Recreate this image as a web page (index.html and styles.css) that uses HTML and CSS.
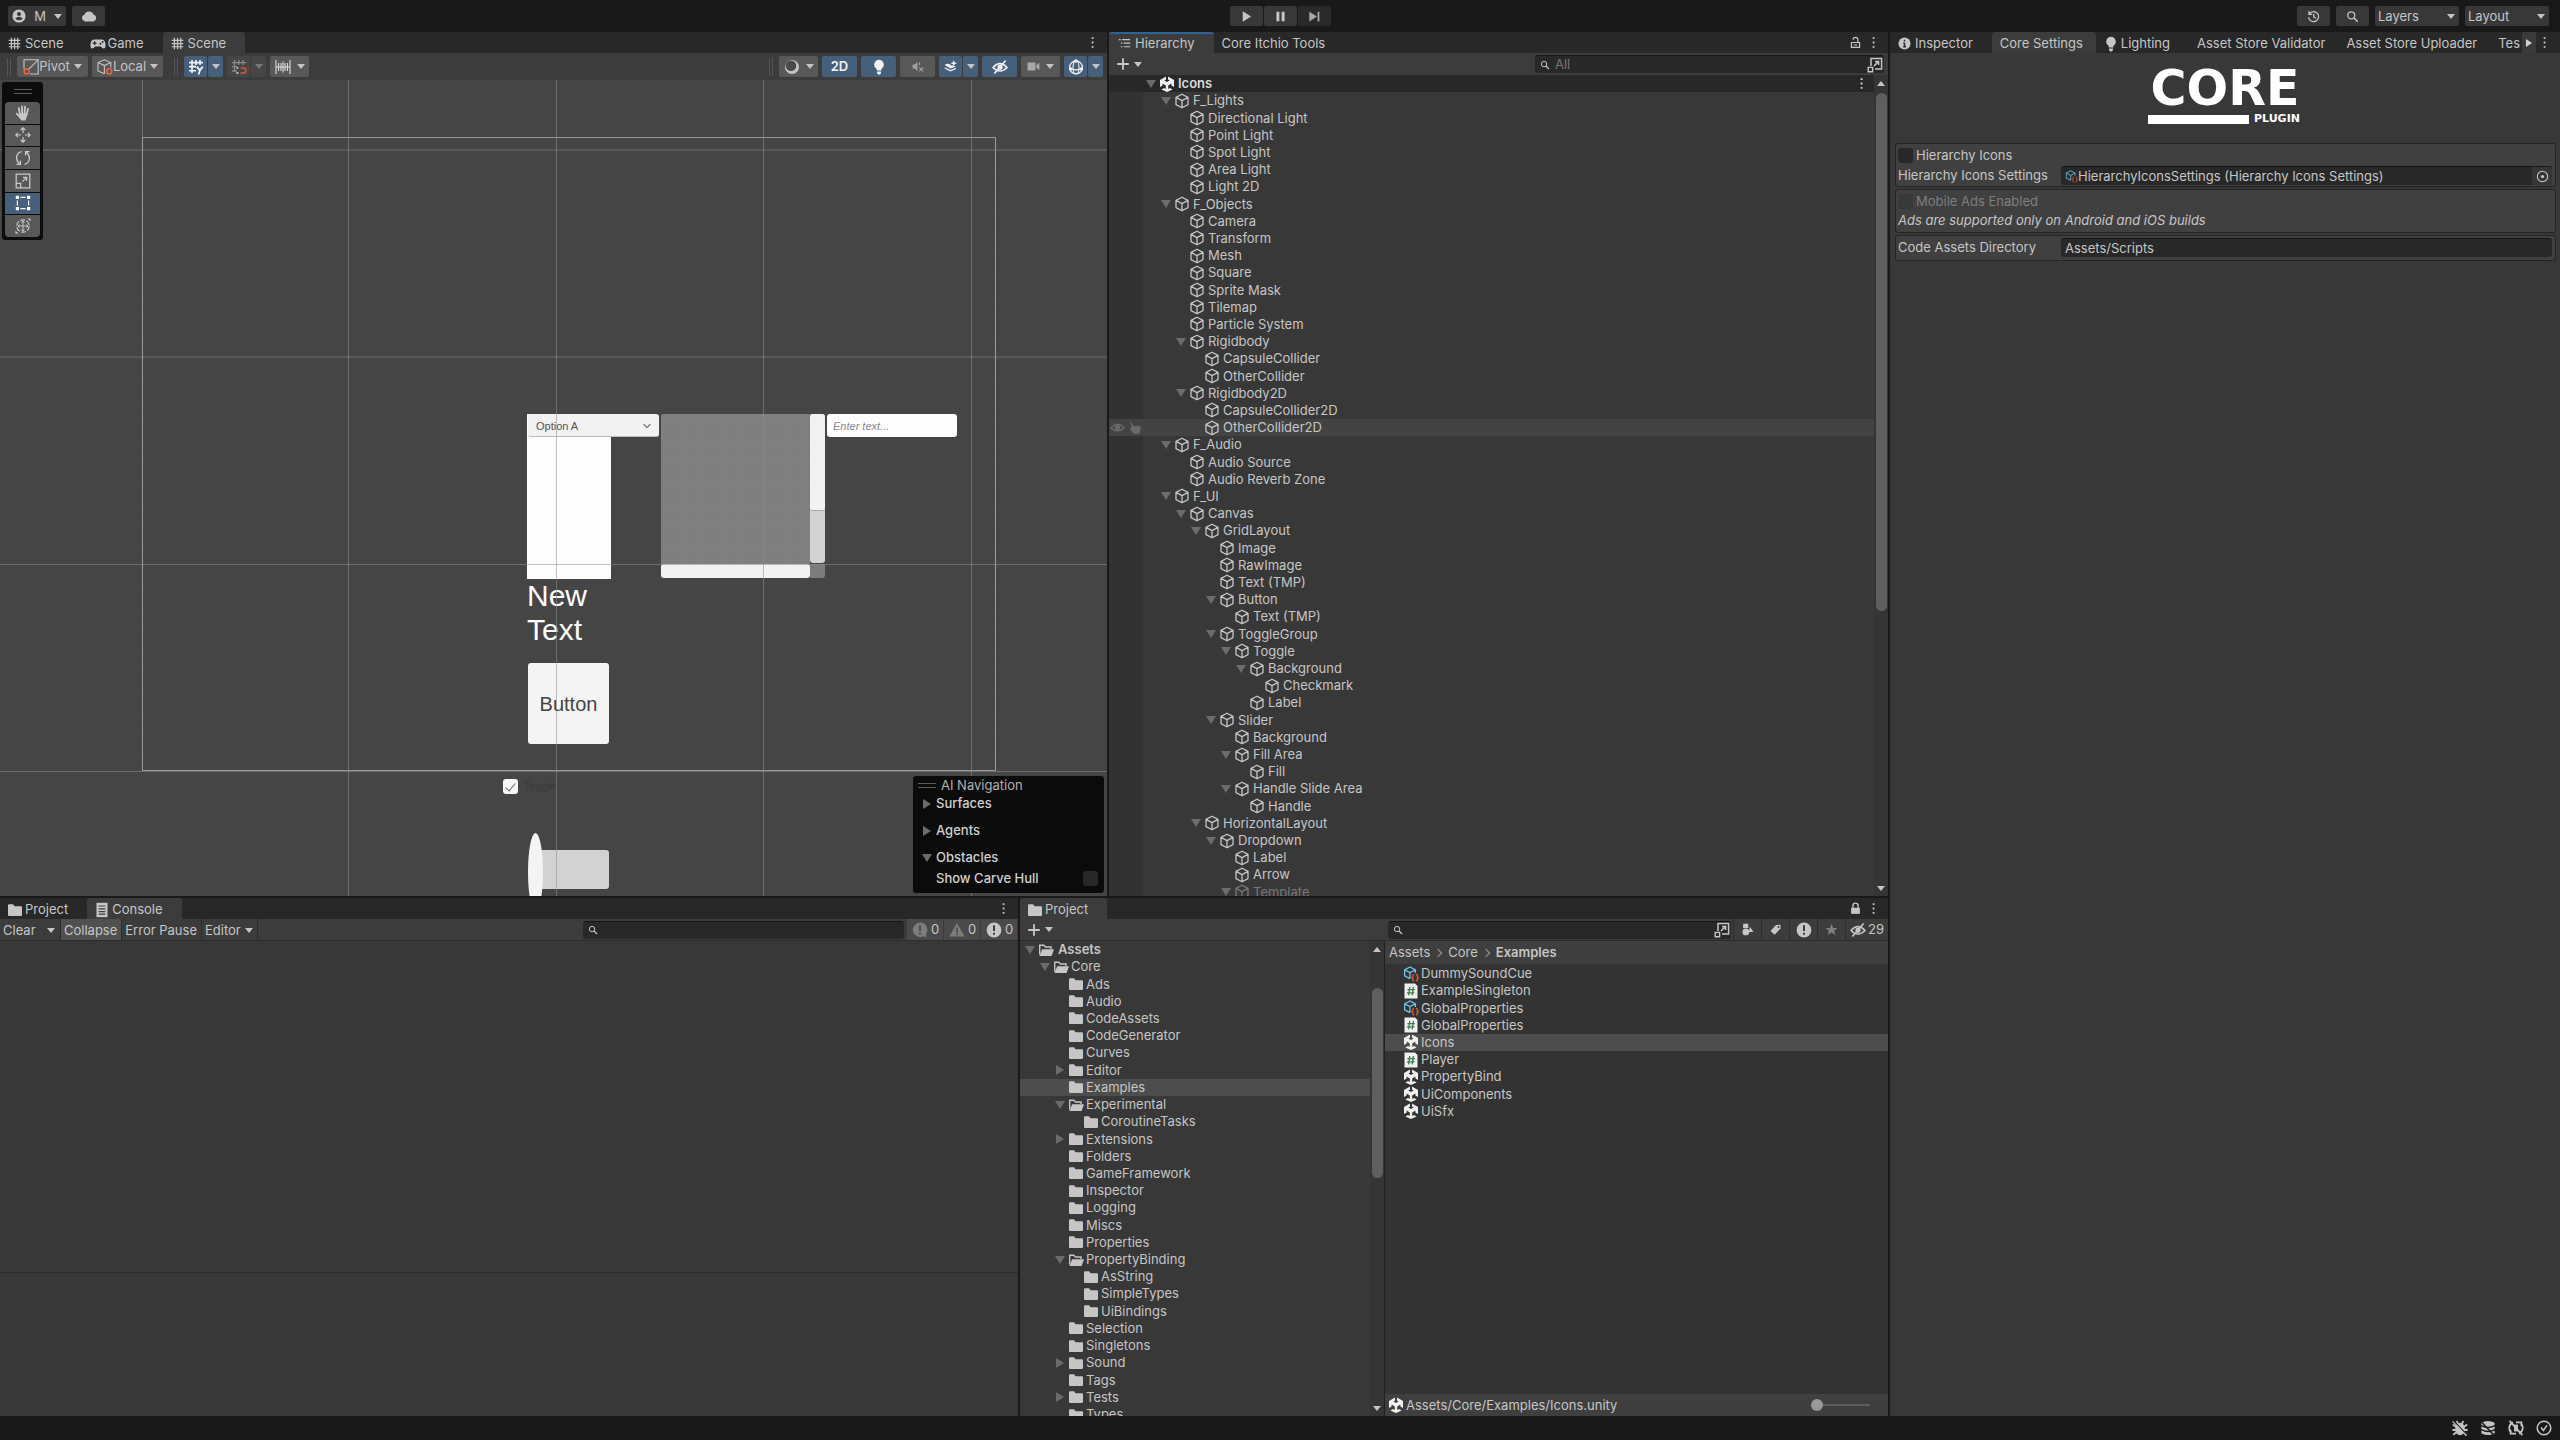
FILE: index.html
```html
<!DOCTYPE html>
<html lang="en">
<head>
<meta charset="utf-8">
<title>Unity Editor - Icons</title>
<link rel="stylesheet" href="styles.css">
</head>
<body>
<svg class="defs" aria-hidden="true">
  <symbol id="cube" viewBox="0 0 16 16"><path d="M8 1.2 14 4.4V11.6L8 14.8 2 11.6V4.4ZM2 4.4 8 7.6 14 4.4M8 7.6V14.8" fill="none" stroke="currentColor" stroke-width="1.3" stroke-linejoin="round"/></symbol>
  <symbol id="unity" viewBox="0 0 16 16"><path d="M7 .4V3.4L5.4 4.4 8 5.9 10.6 4.4 9 3.4V.4L15 3.9V11L12.4 9.5V7.6L9.2 9.4V13L11 12 13.6 13.4 8 16 2.4 13.4 5 12 6.8 13V9.4L3.6 7.6V9.5L1 11V3.9Z" fill="#f0f0f0"/></symbol>
  <symbol id="folder" viewBox="0 0 16 16"><path d="M1 3.2Q1 2.2 2 2.2H6L7.6 4.2H14Q15 4.2 15 5.2V13Q15 14 14 14H2Q1 14 1 13Z" fill="currentColor"/></symbol>
  <symbol id="folder-open" viewBox="0 0 16 16"><path d="M1.7 12.6V3.2H5.8L7.4 5H13V7" fill="none" stroke="currentColor" stroke-width="1.4"/><path d="M4.2 7.2H16L13.6 14H1.4Z" fill="currentColor"/></symbol>
  <symbol id="asset" viewBox="0 0 16 16"><path d="M7 12.6 1.6 9.8V3.8L7 1 12.4 3.8V7M1.6 3.8 7 6.6 12.4 3.8M7 6.6V12.6" fill="none" stroke="#6fc3ea" stroke-width="1.3"/><path d="M11.2 8.4Q9.8 8.4 9.8 9.8V10.8L9 11.6 9.8 12.4V13.6Q9.8 15 11.2 15M13 8.4Q14.4 8.4 14.4 9.8V10.8L15.2 11.6 14.4 12.4V13.6Q14.4 15 13 15" fill="none" stroke="#e0562f" stroke-width="1.4"/></symbol>
  <symbol id="script" viewBox="0 0 16 16"><path d="M1.5 .5H12L14.5 3V15.5H1.5Z" fill="#f0f0f0"/><path d="M6.8 4 5.6 12.4M10.4 4 9.2 12.4M4.4 6.6H11.8M4 9.8H11.4" stroke="#3c7a4c" stroke-width="1.3" fill="none"/></symbol>
  <symbol id="search" viewBox="0 0 16 16"><circle cx="6.5" cy="6.5" r="4.3" fill="none" stroke="currentColor" stroke-width="1.6"/><path d="M9.6 9.6 14.4 14.4" stroke="currentColor" stroke-width="2"/></symbol>
  <symbol id="grid" viewBox="0 0 16 16"><path d="M4.2 1V15M8.1 1V15M12 1V15M1 4.2H15M1 8.1H15M1 12H15" stroke="currentColor" stroke-width="1.5" fill="none"/></symbol>
  <symbol id="gamepad" viewBox="0 0 16 16"><path d="M4 3.6H12Q15.6 4.2 15.6 9.6 15.6 12.4 13.8 12.4 12.4 12.4 10.8 10.4H5.2Q3.6 12.4 2.2 12.4 .4 12.4 .4 9.6 .4 4.2 4 3.6Z" fill="currentColor"/><path d="M4.6 5.2V9M2.7 7.1H6.5" stroke="#282828" stroke-width="1.3"/><circle cx="10.4" cy="7.8" r="1" fill="#282828"/><circle cx="12.6" cy="6" r="1" fill="#282828"/></symbol>
  <symbol id="list" viewBox="0 0 16 16"><path d="M5 3.2H15M7 7.6H15M7 12H15" stroke="currentColor" stroke-width="1.5"/><path d="M1 3.2H3.4M3.4 7.6H5.4M3.4 12H5.4" stroke="currentColor" stroke-width="1.5"/></symbol>
  <symbol id="info" viewBox="0 0 16 16"><circle cx="8" cy="8" r="7.4" fill="currentColor"/><path d="M8 7V12.2M8 3.4V5.4M6.6 7.4H8M6.4 12H9.8" stroke="#282828" stroke-width="1.8"/></symbol>
  <symbol id="alert" viewBox="0 0 16 16"><circle cx="8" cy="8" r="7.4" fill="currentColor"/><path d="M8 3.2V9M8 10.8V12.8" stroke="#3c3c3c" stroke-width="2"/></symbol>
  <symbol id="chat" viewBox="0 0 16 16"><path d="M8 .6A7.2 7.2 0 1 0 11.4 14.2L14.6 15.6 13.8 12.2A7.2 7.2 0 0 0 8 .6Z" fill="currentColor"/><path d="M8 3.4V9M8 10.6V12.4" stroke="#4a4a4a" stroke-width="1.9"/></symbol>
  <symbol id="warn" viewBox="0 0 16 16"><path d="M8 1 15.6 14.6H.4Z" fill="currentColor"/><path d="M8 5.4V10.4M8 11.6V13.2" stroke="#4a4a4a" stroke-width="1.7"/></symbol>
  <symbol id="bulb" viewBox="0 0 16 16"><path d="M8 .8A4.8 4.8 0 0 0 5.4 9.6L5.8 11.6H10.2L10.6 9.6A4.8 4.8 0 0 0 8 .8ZM6 12.5H10V14L9 15.4H7L6 14Z" fill="currentColor"/></symbol>
  <symbol id="doc" viewBox="0 0 16 16"><path d="M2.5 .8H13.5V15.2H2.5Z" fill="currentColor"/><path d="M4.6 4H11.4M4.6 6.8H11.4M4.6 9.6H11.4M4.6 12.2H11.4" stroke="#3c3c3c" stroke-width="1.2"/></symbol>
  <symbol id="dots" viewBox="0 0 16 16"><path d="M7 1.6H9.2V3.8H7ZM7 6.9H9.2V9.1H7ZM7 12.2H9.2V14.4H7Z" fill="currentColor"/></symbol>
  <symbol id="lock" viewBox="0 0 16 16"><path d="M4.8 7V4.6A3.2 3.2 0 0 1 11.2 4.6V7" fill="none" stroke="currentColor" stroke-width="1.7"/><path d="M2.6 7H13.4V14.6H2.6Z" fill="currentColor"/></symbol>
  <symbol id="unlock" viewBox="0 0 16 16"><path d="M5 4.6A3 3 0 0 1 11 4.6V8M3 8H13V14H3Z" fill="none" stroke="currentColor" stroke-width="1.5"/><path d="M6 11H10" stroke="currentColor" stroke-width="1.3"/></symbol>
  <symbol id="plus" viewBox="0 0 16 16"><path d="M8 1.4V14.6M1.4 8H14.6" stroke="currentColor" stroke-width="2.1"/></symbol>
  <symbol id="popout" viewBox="0 0 16 16"><path d="M4 9V1.4H14.6V12H8" fill="none" stroke="currentColor" stroke-width="1.5"/><path d="M1.2 10.4H5.6V14.8H1.2Z" fill="none" stroke="currentColor" stroke-width="1.4"/><path d="M7 9 11.6 4.4M8 4.4H11.6V8" fill="none" stroke="currentColor" stroke-width="1.5"/></symbol>
  <symbol id="eye-off" viewBox="0 0 16 16"><path d="M1 8.4Q8 .6 15 8.4 8 15.6 1 8.4Z" fill="none" stroke="currentColor" stroke-width="1.5"/><circle cx="8" cy="8.2" r="2.6" fill="currentColor"/><path d="M2.4 14.6 13.6 1.6" stroke="currentColor" stroke-width="1.6"/></symbol>
  <symbol id="eye" viewBox="0 0 16 16"><path d="M1 8.2Q8 .8 15 8.2 8 15 1 8.2Z" fill="none" stroke="currentColor" stroke-width="1.5"/><circle cx="8" cy="8" r="2.8" fill="currentColor"/></symbol>
  <symbol id="pick" viewBox="0 0 16 16"><path d="M3.4 1.4 7 6.4 13 6.6Q14.8 6.8 14.6 9L13.4 14.6H7L2.8 9.2 4.8 8.6Z" fill="currentColor"/></symbol>
  <symbol id="user" viewBox="0 0 16 16"><circle cx="8" cy="8" r="7.5" fill="currentColor"/><circle cx="8" cy="5.6" r="2.3" fill="#383838"/><path d="M3.6 11Q8 6.8 12.4 11 8 14.6 3.6 11Z" fill="#383838"/></symbol>
  <symbol id="cloud" viewBox="0 0 16 16"><path d="M4 13.4A3.4 3.4 0 0 1 3.4 6.8 4.8 4.8 0 0 1 12.4 6.4 3.6 3.6 0 0 1 12.2 13.4Z" fill="currentColor"/></symbol>
  <symbol id="play" viewBox="0 0 16 16"><path d="M3.4 1.6 13.6 8 3.4 14.4Z" fill="currentColor"/></symbol>
  <symbol id="pause" viewBox="0 0 16 16"><path d="M3 2.2H6.6V13.8H3ZM9.4 2.2H13V13.8H9.4Z" fill="currentColor"/></symbol>
  <symbol id="step" viewBox="0 0 16 16"><path d="M1.6 2 11 8 1.6 14ZM11.8 2H14V14H11.8Z" fill="currentColor"/></symbol>
  <symbol id="history" viewBox="0 0 16 16"><path d="M3 4.6A6.2 6.2 0 1 1 2 9M2.4 1.4V5.4H6.4M8.4 4.6V8.8L11 10.2" fill="none" stroke="currentColor" stroke-width="1.6"/></symbol>
  <symbol id="pivot" viewBox="0 0 16 16"><path d="M1 10V.8H15.2V15H7M5.6 10.4 14.6 1.4" fill="none" stroke="#c4c4c4" stroke-width="1.1"/><circle cx="3.6" cy="12.6" r="2.5" fill="none" stroke="#f0633c" stroke-width="1.5"/></symbol>
  <symbol id="local" viewBox="0 0 16 16"><path d="M7.4 14.8 1 12V3.6L7.4 .8 13.8 3.6V8.4M1 3.6 7.4 6.6 13.8 3.6M7.4 6.6V14.8" fill="none" stroke="#c4c4c4" stroke-width="1.1"/><circle cx="12.2" cy="12.4" r="2.6" fill="none" stroke="#f0633c" stroke-width="1.6"/></symbol>
  <symbol id="grid-y" viewBox="0 0 16 16"><path d="M4 1V14M8 1V6M12 1V6M1 3.6H15M1 7.6H8M1 11.8H8" stroke="currentColor" stroke-width="1.6" fill="none"/><path d="M8.8 7.6 11.8 11.4 14.8 7.6M11.8 11.4 10.6 15.6" stroke="currentColor" stroke-width="1.8" fill="none"/></symbol>
  <symbol id="snap" viewBox="0 0 16 16"><path d="M3.6 1V13M7.8 1V6M12 1V6M1 3.6H15M1 7.6H6M1 11.8H6" stroke="#8a8a8a" stroke-width="1.3" fill="none"/><path d="M9.6 8.8H12.4A2.6 2.6 0 0 1 12.4 14H9.6" stroke="#c4533a" stroke-width="1.8" fill="none"/><path d="M6.4 8V9.8M6.4 13V15" stroke="#c4c4c4" stroke-width="1.8"/></symbol>
  <symbol id="ruler" viewBox="0 0 16 16"><path d="M1 1V15M15 1V15M3.6 4V12M6 4V12M8 2.6V13.4M10 4V12M12.4 4V12M1 8H15" stroke="currentColor" stroke-width="1.1" fill="none"/></symbol>
  <symbol id="sphere" viewBox="0 0 16 16"><circle cx="8" cy="8" r="7" fill="#c4c4c4"/><circle cx="7" cy="6.8" r="5.3" fill="#4a4a4a"/></symbol>
  <symbol id="mute" viewBox="0 0 16 16"><path d="M2 5.4H4.6L8 2.4V13.6L4.6 10.6H2Z" fill="#a4a4a4"/><path d="M10 9 15 14M15 9 10 14M10.4 3V6.6" stroke="#a4a4a4" stroke-width="1.3"/></symbol>
  <symbol id="fx" viewBox="0 0 16 16"><path d="M.8 6.2Q4 3.4 7.2 5.2 8 7 11 6.8L14.6 8 8 10.6ZM.8 9 8 12.2 14.8 9.4V11L8 14 .8 10.6Z" fill="currentColor"/><path d="M12 0 13 2.8 16 4 13 5.2 12 8 11 5.2 8 4 11 2.8Z" fill="currentColor"/></symbol>
  <symbol id="camera" viewBox="0 0 16 16"><path d="M.6 3H10.4V13H.6ZM11.4 6.6 15.2 3.4V12.6L11.4 9.4Z" fill="#a8a8a8"/></symbol>
  <symbol id="gizmo" viewBox="0 0 16 16"><circle cx="8" cy="8.4" r="6.4" fill="none" stroke="currentColor" stroke-width="1.3"/><ellipse cx="8" cy="8.4" rx="3" ry="6.4" fill="none" stroke="currentColor" stroke-width="1.1"/><path d="M1.6 9.4Q8 12.4 14.4 9.4" fill="none" stroke="currentColor" stroke-width="1.2"/><circle cx="8" cy="2" r="1.8" fill="currentColor"/><circle cx="2.6" cy="10" r="1.7" fill="currentColor"/><circle cx="13.4" cy="10" r="1.7" fill="currentColor"/></symbol>
  <symbol id="hand" viewBox="0 0 16 16"><path d="M5 10 3.8 3.2M7.2 9 7 1.4M9.6 9 10 1.6M11.6 10 13 4M5.4 12.4 1.6 8.6" stroke="currentColor" stroke-width="1.8" stroke-linecap="round"/><path d="M4 8.4H12.6L11.4 13 10.4 15.6H6.4L4 12.4Z" fill="currentColor"/></symbol>
  <symbol id="move" viewBox="0 0 16 16"><path d="M8 1V6M8 10V15M1 8H6M10 8H15M5.8 3 8 .8 10.2 3M5.8 13 8 15.2 10.2 13M3 5.8 .8 8 3 10.2M13 5.8 15.2 8 13 10.2" fill="none" stroke="currentColor" stroke-width="1.2"/></symbol>
  <symbol id="rotate" viewBox="0 0 16 16"><path d="M6.4 1.6Q1.6 3 1.6 8 1.6 11.4 4.8 14M9.6 14.4Q14.4 13 14.4 8 14.4 4.6 11.2 2M1.4 14.4H5.4V10.6M14.6 1.6H10.6V5.4" fill="none" stroke="currentColor" stroke-width="1.3"/></symbol>
  <symbol id="scale" viewBox="0 0 16 16"><path d="M1.2 1.2H14.8V14.8H1.2ZM1.2 10.4H5.6V14.8M7.4 8.6 11.6 4.4M8 4.4H11.6V8" fill="none" stroke="currentColor" stroke-width="1.3"/></symbol>
  <symbol id="rect" viewBox="0 0 16 16"><path d="M5.4 2.4H10.6M5.4 13.6H10.6M2.4 5.4V10.6M13.6 5.4V10.6" stroke="currentColor" stroke-width="1.2"/><path d="M.8 .8H4V4H.8ZM12 .8H15.2V4H12ZM.8 12H4V15.2H.8ZM12 12H15.2V15.2H12Z" fill="currentColor"/></symbol>
  <symbol id="transform" viewBox="0 0 16 16"><circle cx="8" cy="8" r="6.2" fill="none" stroke="currentColor" stroke-width="1.2" stroke-dasharray="5 1.4"/><path d="M8 3V13M3 8H13M6.4 4.6 8 3 9.6 4.6M6.4 11.4 8 13 9.6 11.4M4.6 6.4 3 8 4.6 9.6M11.4 6.4 13 8 11.4 9.6" fill="none" stroke="currentColor" stroke-width="1"/><path d="M12.4 .4H15.6V3.6ZM.4 12.4V15.6H3.6Z" fill="currentColor"/></symbol>
  <symbol id="shapes" viewBox="0 0 16 16"><path d="M2.6 .8H9V6H2.6ZM11 4.6 15.4 11H9.6Z" fill="currentColor"/><circle cx="6" cy="11" r="4.2" fill="currentColor"/></symbol>
  <symbol id="tag" viewBox="0 0 16 16"><path d="M8.6 2.6 14 2 14.2 6.6 7 14.6 1.8 9.8Z" fill="currentColor"/><circle cx="11.6" cy="4.8" r="1.2" fill="#3c3c3c"/></symbol>
  <symbol id="star" viewBox="0 0 16 16"><path d="M8 1 10 6H15.4L11.2 9.4 12.8 14.8 8 11.6 3.2 14.8 4.8 9.4 .6 6H6Z" fill="#7e7e7e"/></symbol>
  <symbol id="target" viewBox="0 0 16 16"><circle cx="8" cy="8" r="6.4" fill="none" stroke="currentColor" stroke-width="1.3"/><circle cx="8" cy="8" r="2" fill="currentColor"/></symbol>
  <symbol id="bug-off" viewBox="0 0 16 16"><ellipse cx="8" cy="9" rx="4.8" ry="6.2" fill="currentColor"/><path d="M4.6 1 6.4 4.4M11.4 1 9.6 4.4M.8 4.6 4.4 7M.4 10H4M1.2 14.8 4.6 12M15.2 4.6 11.6 7M15.6 10H12M14.8 14.8 11.4 12" stroke="currentColor" stroke-width="1.8"/><path d="M1.4 .6 15.4 15.2" stroke="#191919" stroke-width="1.2"/><path d="M.6 1.4 14.6 16" stroke="currentColor" stroke-width="1.2"/></symbol>
  <symbol id="cache-off" viewBox="0 0 16 16"><path d="M1.4 2.8Q8-.6 14.6 2.8V5Q8 8.4 1.4 5ZM1.4 6.6Q8 10 14.6 6.6V9Q8 12.6 1.4 9ZM1.4 10.6Q8 14 14.6 10.6V13.2Q8 17 1.4 13.2Z" fill="currentColor"/><path d="M2 2.6 14.6 16" stroke="#191919" stroke-width="1.5"/></symbol>
  <symbol id="refresh-off" viewBox="0 0 16 16"><path d="M3 12.6A6.6 6.6 0 0 1 5 2.2M13 3.4A6.6 6.6 0 0 1 11 13.8M8 2.4H13.4V6M8 13.6H2.6V10M1.6 .8 14.4 15.2" fill="none" stroke="currentColor" stroke-width="1.8"/><path d="M6 4.6H10V11.4H6Z" fill="currentColor"/></symbol>
  <symbol id="ok" viewBox="0 0 16 16"><circle cx="8" cy="8" r="6.8" fill="none" stroke="currentColor" stroke-width="1.5"/><path d="M5 7.6 7.4 10.4 11 5.4" fill="none" stroke="currentColor" stroke-width="1.6"/></symbol>
</svg>

<div class="app">
  <header class="topbar">
    <div class="bar-left">
      <button class="tb account caret"><svg><use href="#user"/></svg><span>M</span></button>
      <button class="tb cloud" aria-label="Cloud"><svg class="big"><use href="#cloud"/></svg></button>
    </div>
    <div class="transport">
      <button class="tb" aria-label="Play"><svg><use href="#play"/></svg></button>
      <button class="tb" aria-label="Pause"><svg><use href="#pause"/></svg></button>
      <button class="tb dim" aria-label="Step"><svg><use href="#step"/></svg></button>
    </div>
    <div class="bar-right">
      <button class="tb" aria-label="History"><svg><use href="#history"/></svg></button>
      <button class="tb" aria-label="Search"><svg><use href="#search"/></svg></button>
      <span class="pick caret"><select aria-label="Layers"><option>Layers</option></select></span>
      <span class="pick caret"><select aria-label="Layout"><option>Layout</option></select></span>
    </div>
  </header>

  <main class="work">
    <div class="left">
      <div class="upper">
        <section class="panel scene">
          <nav class="tabs">
            <a href="#" class="tab"><svg><use href="#grid"/></svg>Scene</a>
            <a href="#" class="tab"><svg class="big"><use href="#gamepad"/></svg>Game</a>
            <a href="#" class="tab on"><svg><use href="#grid"/></svg>Scene</a>
            <span class="tab-end"><svg><use href="#dots"/></svg></span>
          </nav>
          <div class="tools">
            <i class="grip"></i>
            <button class="tool wide caret"><svg class="big"><use href="#pivot"/></svg>Pivot</button>
            <button class="tool wide caret"><svg class="big"><use href="#local"/></svg>Local</button>
            <i class="grip"></i>
            <span class="split on"><button class="tool" aria-label="Grid"><svg class="big"><use href="#grid-y"/></svg></button><button class="tool arrow caret" aria-label="Grid options"></button></span>
            <span class="split off"><button class="tool" aria-label="Snap"><svg class="big"><use href="#snap"/></svg></button><button class="tool arrow caret" aria-label="Snap options"></button></span>
            <button class="tool mid caret" aria-label="Increment"><svg class="big"><use href="#ruler"/></svg></button>
            <i class="grip push"></i>
            <button class="tool mid caret" aria-label="Shading"><svg class="big"><use href="#sphere"/></svg></button>
            <button class="tool sq on">2D</button>
            <button class="tool sq on" aria-label="Lighting"><svg class="big"><use href="#bulb"/></svg></button>
            <button class="tool sq" aria-label="Audio"><svg><use href="#mute"/></svg></button>
            <span class="split on"><button class="tool" aria-label="Effects"><svg><use href="#fx"/></svg></button><button class="tool arrow caret" aria-label="Effect options"></button></span>
            <button class="tool sq on" aria-label="Hidden objects"><svg class="big"><use href="#eye-off"/></svg></button>
            <button class="tool mid caret" aria-label="Camera"><svg><use href="#camera"/></svg></button>
            <span class="split on"><button class="tool" aria-label="Gizmos"><svg class="big"><use href="#gizmo"/></svg></button><button class="tool arrow caret" aria-label="Gizmo options"></button></span>
          </div>
          <div class="view">
            <div class="obj raw-image"></div>
            <select class="obj dropdown" aria-label="Dropdown"><option>Option A</option></select>
            <svg class="obj chevron" viewBox="0 0 8 6"><path d="M.6 1 4 4.6 7.4 1" fill="none" stroke="#777" stroke-width="1.2"/></svg>
            <div class="obj scroll-body"></div>
            <div class="obj vtrack"><div class="vthumb"></div></div>
            <div class="obj htrack"></div>
            <div class="obj corner"></div>
            <input class="obj field" placeholder="Enter text..." aria-label="Input field">
            <p class="obj new-text">New<br>Text</p>
            <button class="obj ui-button">Button</button>
            <label class="obj ui-toggle"><input type="checkbox" checked>Toggle</label>
            <div class="obj slider-bg"></div>
            <div class="obj slider-knob"></div>
            <svg class="grid-lines" aria-hidden="true">
              <defs>
                <pattern id="minor" x="348" y="70" width="104" height="104" patternUnits="userSpaceOnUse">
                  <path d="M.5 0V104M21.5 0V104M42.5 0V104M62.5 0V104M83.5 0V104M0 .5H104M0 21.5H104M0 42.5H104M0 62.5H104M0 83.5H104" stroke="#fff" stroke-opacity=".012"/>
                </pattern>
              </defs>
              <rect width="100%" height="100%" fill="url(#minor)"/>
              <path d="M348.5 0V816M556.5 0V816M763.5 0V816M971.5 0V816M0 70H1107M0 277H1107M0 484.5H1107M0 691.5H1107" stroke="#8e8e8e" stroke-opacity=".55"/>
              <path d="M142.5 0V58" stroke="#8e8e8e" stroke-opacity=".6"/>
              <path d="M142.5 58V690M995.5 58V690" stroke="#9c9c9c" fill="none"/>
              <path d="M142 57.5H996M142 690.5H996" stroke="#969696" fill="none"/>
            </svg>
            <div class="toolbox">
              <i class="hgrip"></i>
              <div class="toolset">
                <button class="tool" aria-label="Hand"><svg class="big"><use href="#hand"/></svg></button>
                <button class="tool" aria-label="Move"><svg class="big"><use href="#move"/></svg></button>
                <button class="tool" aria-label="Rotate"><svg class="big"><use href="#rotate"/></svg></button>
                <button class="tool" aria-label="Scale"><svg class="big"><use href="#scale"/></svg></button>
                <button class="tool on" aria-label="Rect"><svg class="big"><use href="#rect"/></svg></button>
                <button class="tool" aria-label="Transform"><svg class="big"><use href="#transform"/></svg></button>
              </div>
            </div>
            <div class="ainav">
              <div class="ai-title"><i class="hgrip"></i>AI Navigation</div>
              <div class="ai-head"><i class="tri side"></i>Surfaces</div>
              <div class="ai-head"><i class="tri side"></i>Agents</div>
              <div class="ai-head"><i class="tri"></i>Obstacles</div>
              <label class="ai-check">Show Carve Hull<input type="checkbox"></label>
            </div>
          </div>
        </section>

        <section class="panel hierarchy">
          <nav class="tabs">
            <a href="#" class="tab on focus"><svg><use href="#list"/></svg>Hierarchy</a>
            <a href="#" class="tab plain">Core Itchio Tools</a>
            <span class="tab-end"><svg><use href="#unlock"/></svg><svg><use href="#dots"/></svg></span>
          </nav>
          <div class="subbar">
            <button class="add caret" aria-label="Create"><svg><use href="#plus"/></svg></button>
            <label class="find"><svg><use href="#search"/></svg><input type="text" placeholder="All" aria-label="Search hierarchy"><svg class="big pop"><use href="#popout"/></svg></label>
          </div>
          <div class="tree-wrap">
            <ul class="tree htree">
              <li class="root d0"><i class="tri"></i><svg><use href="#unity"/></svg>Icons<svg class="more"><use href="#dots"/></svg></li>
              <li class="d1"><i class="tri"></i><svg><use href="#cube"/></svg>F_Lights</li>
              <li class="d2"><svg><use href="#cube"/></svg>Directional Light</li>
              <li class="d2"><svg><use href="#cube"/></svg>Point Light</li>
              <li class="d2"><svg><use href="#cube"/></svg>Spot Light</li>
              <li class="d2"><svg><use href="#cube"/></svg>Area Light</li>
              <li class="d2"><svg><use href="#cube"/></svg>Light 2D</li>
              <li class="d1"><i class="tri"></i><svg><use href="#cube"/></svg>F_Objects</li>
              <li class="d2"><svg><use href="#cube"/></svg>Camera</li>
              <li class="d2"><svg><use href="#cube"/></svg>Transform</li>
              <li class="d2"><svg><use href="#cube"/></svg>Mesh</li>
              <li class="d2"><svg><use href="#cube"/></svg>Square</li>
              <li class="d2"><svg><use href="#cube"/></svg>Sprite Mask</li>
              <li class="d2"><svg><use href="#cube"/></svg>Tilemap</li>
              <li class="d2"><svg><use href="#cube"/></svg>Particle System</li>
              <li class="d2"><i class="tri"></i><svg><use href="#cube"/></svg>Rigidbody</li>
              <li class="d3"><svg><use href="#cube"/></svg>CapsuleCollider</li>
              <li class="d3"><svg><use href="#cube"/></svg>OtherCollider</li>
              <li class="d2"><i class="tri"></i><svg><use href="#cube"/></svg>Rigidbody2D</li>
              <li class="d3"><svg><use href="#cube"/></svg>CapsuleCollider2D</li>
              <li class="d3 hover"><span class="vis"><svg><use href="#eye"/></svg><svg><use href="#pick"/></svg></span><svg><use href="#cube"/></svg>OtherCollider2D</li>
              <li class="d1"><i class="tri"></i><svg><use href="#cube"/></svg>F_Audio</li>
              <li class="d2"><svg><use href="#cube"/></svg>Audio Source</li>
              <li class="d2"><svg><use href="#cube"/></svg>Audio Reverb Zone</li>
              <li class="d1"><i class="tri"></i><svg><use href="#cube"/></svg>F_UI</li>
              <li class="d2"><i class="tri"></i><svg><use href="#cube"/></svg>Canvas</li>
              <li class="d3"><i class="tri"></i><svg><use href="#cube"/></svg>GridLayout</li>
              <li class="d4"><svg><use href="#cube"/></svg>Image</li>
              <li class="d4"><svg><use href="#cube"/></svg>RawImage</li>
              <li class="d4"><svg><use href="#cube"/></svg>Text (TMP)</li>
              <li class="d4"><i class="tri"></i><svg><use href="#cube"/></svg>Button</li>
              <li class="d5"><svg><use href="#cube"/></svg>Text (TMP)</li>
              <li class="d4"><i class="tri"></i><svg><use href="#cube"/></svg>ToggleGroup</li>
              <li class="d5"><i class="tri"></i><svg><use href="#cube"/></svg>Toggle</li>
              <li class="d6"><i class="tri"></i><svg><use href="#cube"/></svg>Background</li>
              <li class="d7"><svg><use href="#cube"/></svg>Checkmark</li>
              <li class="d6"><svg><use href="#cube"/></svg>Label</li>
              <li class="d4"><i class="tri"></i><svg><use href="#cube"/></svg>Slider</li>
              <li class="d5"><svg><use href="#cube"/></svg>Background</li>
              <li class="d5"><i class="tri"></i><svg><use href="#cube"/></svg>Fill Area</li>
              <li class="d6"><svg><use href="#cube"/></svg>Fill</li>
              <li class="d5"><i class="tri"></i><svg><use href="#cube"/></svg>Handle Slide Area</li>
              <li class="d6"><svg><use href="#cube"/></svg>Handle</li>
              <li class="d3"><i class="tri"></i><svg><use href="#cube"/></svg>HorizontalLayout</li>
              <li class="d4"><i class="tri"></i><svg><use href="#cube"/></svg>Dropdown</li>
              <li class="d5"><svg><use href="#cube"/></svg>Label</li>
              <li class="d5"><svg><use href="#cube"/></svg>Arrow</li>
              <li class="d5 inactive"><i class="tri"></i><svg><use href="#cube"/></svg>Template</li>
            </ul>
            <div class="sbar"><i class="up"></i><i class="thumb hthumb"></i><i class="down"></i></div>
          </div>
        </section>
      </div>

      <div class="lower">
        <section class="panel console">
          <nav class="tabs">
            <a href="#" class="tab"><svg class="big"><use href="#folder"/></svg>Project</a>
            <a href="#" class="tab on"><svg class="big"><use href="#doc"/></svg>Console</a>
            <span class="tab-end"><svg><use href="#dots"/></svg></span>
          </nav>
          <div class="subbar flat">
            <button class="cb clear caret">Clear</button>
            <button class="cb pressed">Collapse</button>
            <button class="cb">Error Pause</button>
            <button class="cb caret">Editor</button>
            <label class="find log-find"><svg><use href="#search"/></svg><input type="text" aria-label="Search console"></label>
            <button class="count faint"><svg class="big"><use href="#chat"/></svg>0</button>
            <button class="count faint"><svg class="big"><use href="#warn"/></svg>0</button>
            <button class="count"><svg class="big"><use href="#alert"/></svg>0</button>
          </div>
          <div class="log"></div>
          <div class="log-detail"></div>
        </section>

        <section class="panel project">
          <nav class="tabs">
            <a href="#" class="tab on"><svg class="big"><use href="#folder"/></svg>Project</a>
            <span class="tab-end"><svg><use href="#lock"/></svg><svg><use href="#dots"/></svg></span>
          </nav>
          <div class="subbar flat">
            <button class="add caret" aria-label="Create asset"><svg><use href="#plus"/></svg></button>
            <label class="find proj-find"><svg><use href="#search"/></svg><input type="text" aria-label="Search project"><svg class="big pop"><use href="#popout"/></svg></label>
            <button class="filter" aria-label="By type"><svg><use href="#shapes"/></svg></button>
            <button class="filter" aria-label="By label"><svg><use href="#tag"/></svg></button>
            <button class="filter" aria-label="By log"><svg class="big"><use href="#alert"/></svg></button>
            <button class="filter" aria-label="Favorites"><svg><use href="#star"/></svg></button>
            <button class="filter hidden-count"><svg class="big"><use href="#eye-off"/></svg>29</button>
          </div>
          <div class="proj-body">
            <div class="tree-wrap">
              <ul class="tree ptree">
                <li class="d0 strong"><i class="tri"></i><svg class="big"><use href="#folder-open"/></svg>Assets</li>
                <li class="d1"><i class="tri"></i><svg class="big"><use href="#folder-open"/></svg>Core</li>
                <li class="d2"><svg><use href="#folder"/></svg>Ads</li>
                <li class="d2"><svg><use href="#folder"/></svg>Audio</li>
                <li class="d2"><svg><use href="#folder"/></svg>CodeAssets</li>
                <li class="d2"><svg><use href="#folder"/></svg>CodeGenerator</li>
                <li class="d2"><svg><use href="#folder"/></svg>Curves</li>
                <li class="d2"><i class="tri side"></i><svg><use href="#folder"/></svg>Editor</li>
                <li class="d2 selected"><svg><use href="#folder"/></svg>Examples</li>
                <li class="d2"><i class="tri"></i><svg><use href="#folder-open"/></svg>Experimental</li>
                <li class="d3"><svg><use href="#folder"/></svg>CoroutineTasks</li>
                <li class="d2"><i class="tri side"></i><svg><use href="#folder"/></svg>Extensions</li>
                <li class="d2"><svg><use href="#folder"/></svg>Folders</li>
                <li class="d2"><svg><use href="#folder"/></svg>GameFramework</li>
                <li class="d2"><svg><use href="#folder"/></svg>Inspector</li>
                <li class="d2"><svg><use href="#folder"/></svg>Logging</li>
                <li class="d2"><svg><use href="#folder"/></svg>Miscs</li>
                <li class="d2"><svg><use href="#folder"/></svg>Properties</li>
                <li class="d2"><i class="tri"></i><svg><use href="#folder-open"/></svg>PropertyBinding</li>
                <li class="d3"><svg><use href="#folder"/></svg>AsString</li>
                <li class="d3"><svg><use href="#folder"/></svg>SimpleTypes</li>
                <li class="d3"><svg><use href="#folder"/></svg>UiBindings</li>
                <li class="d2"><svg><use href="#folder"/></svg>Selection</li>
                <li class="d2"><svg><use href="#folder"/></svg>Singletons</li>
                <li class="d2"><i class="tri side"></i><svg><use href="#folder"/></svg>Sound</li>
                <li class="d2"><svg><use href="#folder"/></svg>Tags</li>
                <li class="d2"><i class="tri side"></i><svg><use href="#folder"/></svg>Tests</li>
                <li class="d2"><svg><use href="#folder"/></svg>Types</li>
              </ul>
              <div class="sbar"><i class="up"></i><i class="thumb pthumb"></i><i class="down"></i></div>
            </div>
            <div class="files">
              <nav class="crumbs"><a href="#">Assets</a><i></i><a href="#">Core</a><i></i><a href="#" class="here">Examples</a></nav>
              <ul class="filelist">
                <li><svg class="big"><use href="#asset"/></svg>DummySoundCue</li>
                <li><svg class="big"><use href="#script"/></svg>ExampleSingleton</li>
                <li><svg class="big"><use href="#asset"/></svg>GlobalProperties</li>
                <li><svg class="big"><use href="#script"/></svg>GlobalProperties</li>
                <li class="selected"><svg class="big"><use href="#unity"/></svg>Icons</li>
                <li><svg class="big"><use href="#script"/></svg>Player</li>
                <li><svg class="big"><use href="#unity"/></svg>PropertyBind</li>
                <li><svg class="big"><use href="#unity"/></svg>UiComponents</li>
                <li><svg class="big"><use href="#unity"/></svg>UiSfx</li>
              </ul>
              <footer class="path"><svg class="big"><use href="#unity"/></svg><span>Assets/Core/Examples/Icons.unity</span><input type="range" min="0" max="100" value="0" aria-label="Icon size"></footer>
            </div>
          </div>
        </section>
      </div>
    </div>

    <section class="panel inspector">
      <nav class="tabs">
        <a href="#" class="tab"><svg><use href="#info"/></svg>Inspector</a>
        <a href="#" class="tab on plain">Core Settings</a>
        <a href="#" class="tab"><svg class="big"><use href="#bulb"/></svg>Lighting</a>
        <a href="#" class="tab plain">Asset Store Validator</a>
        <a href="#" class="tab plain">Asset Store Uploader</a>
        <a href="#" class="tab cut">Tes</a>
        <button class="tab-next" aria-label="More tabs"><i></i></button>
        <span class="tab-end"><svg><use href="#dots"/></svg></span>
      </nav>
      <div class="logo">
        <div class="logo-name">CORE</div>
        <div class="logo-sub"><i></i>PLUGIN</div>
      </div>
      <div class="groups">
        <div class="group">
          <label class="check"><input type="checkbox">Hierarchy Icons</label>
          <div class="prop"><span>Hierarchy Icons Settings</span><button class="objfield"><svg class="faded"><use href="#asset"/></svg>HierarchyIconsSettings (Hierarchy Icons Settings)<span class="target"><svg><use href="#target"/></svg></span></button></div>
        </div>
        <div class="group">
          <label class="check disabled"><input type="checkbox" disabled>Mobile Ads Enabled</label>
          <p class="note">Ads are supported only on Android and iOS builds</p>
        </div>
        <div class="group last">
          <div class="prop"><label for="dir">Code Assets Directory</label><input id="dir" type="text" value="Assets/Scripts"></div>
        </div>
      </div>
    </section>
  </main>

  <footer class="status">
    <svg class="big"><use href="#bug-off"/></svg><svg class="big"><use href="#cache-off"/></svg><svg class="big"><use href="#refresh-off"/></svg><svg class="big"><use href="#ok"/></svg>
  </footer>
</div>
</body>
</html>
```

FILE: styles.css
```css
* { box-sizing: border-box; }
html, body { height: 100%; margin: 0; }
body {
  background: #191919;
  color: #c6c6c6;
  font: 13px/17px Inter, "Liberation Sans", sans-serif;
  overflow: hidden;
}
ul, p { margin: 0; padding: 0; list-style: none; }
a { color: inherit; text-decoration: none; }
button, input, select { font: inherit; color: inherit; margin: 0; padding: 0; border: 0; background: none; border-radius: 0; outline: 0; }
svg { width: 13px; height: 13px; flex: none; display: block; }
svg.big { width: 16px; height: 16px; }
.defs { position: absolute; width: 0; height: 0; }

.app { display: grid; grid-template-rows: 32px minmax(0, 1fr) 24px; height: 100vh; }

/* small drop-down arrow shared by every menu button */
.caret::after {
  content: "";
  border: 4px solid transparent;
  border-top: 5px solid #c4c4c4;
  border-bottom: 0;
}

/* top bar */
.topbar { display: grid; grid-template-columns: 1fr auto 1fr; align-items: center; padding: 0 11px 0 8px; }
.bar-left, .bar-right { display: flex; gap: 6px; }
.bar-right { justify-content: flex-end; }
.transport { display: flex; gap: 1px; padding-left: 4px; }
.tb { display: flex; align-items: center; justify-content: center; width: 33px; height: 20px; background: #383838; border-radius: 2px; }
.tb.dim { background: #2a2a2a; color: #a8a8a8; }
.account { width: 58px; gap: 8px; }
.account svg { width: 14px; height: 14px; }
.pick { position: relative; display: flex; align-items: center; width: 84px; height: 20px; background: #383838; border-radius: 2px; }
.pick select { flex: 1; appearance: none; padding-left: 3px; }
.pick::after { margin-right: 4px; }

/* docking areas */
.work { display: grid; grid-template-columns: minmax(0, 1888fr) minmax(0, 670fr); gap: 2px; min-height: 0; }
.left { display: grid; grid-template-rows: minmax(0, 864fr) minmax(0, 518fr); gap: 2px; min-height: 0; }
.upper { display: grid; grid-template-columns: minmax(0, 1107fr) minmax(0, 779fr); gap: 2px; min-height: 0; }
.lower { display: grid; grid-template-columns: minmax(0, 1018fr) minmax(0, 868fr); gap: 2px; min-height: 0; }
.panel { display: flex; flex-direction: column; min-height: 0; background: #383838; overflow: hidden; }

.tabs { display: flex; flex: none; height: 21px; background: #282828; }
.tab { display: flex; align-items: center; gap: 4px; padding: 2px 19px 0 8px; white-space: nowrap; }
.tab svg.big { margin: 0 -2px 0 -1px; }
.tab.on { background: #3c3c3c; border-radius: 3px 3px 0 0; }
.tab.focus { padding: 0 19px 0 9px; border-top: 2px solid #2c6497; }
.tab.plain { padding-right: 13px; }
.tab.cut { flex: none; width: 32px; padding: 2px 0 0 8px; overflow: hidden; margin-right: auto; }
.tab-end { display: flex; align-items: center; gap: 5px; margin-left: auto; padding-right: 8px; }
.tab-next { width: 17px; background: #3a3a3a; display: flex; align-items: center; justify-content: center; }
.tab-next i { border: 4px solid transparent; border-left: 6px solid #d0d0d0; border-right: 0; }
.tab-next + .tab-end { margin-left: 0; padding: 0 9px 0 2px; }

/* scene toolbar */
.tools { display: flex; align-items: center; gap: 4px; flex: none; height: 27px; padding-right: 4px; background: #3c3c3c; }
.grip { width: 4px; height: 18px; margin: 0 2px 0 7px; border: solid #555; border-width: 0 1px; }
.grip.push { margin-left: auto; }
.tool { display: flex; align-items: center; justify-content: center; height: 21px; background: #585858; color: #dedede; border-radius: 2px; }
.tool.wide { width: 71px; color: #c4c4c4; }
.tool.wide::after { margin-left: 4px; }
.tool.mid { width: 39px; gap: 6px; }
.tool.sq { width: 35px; font-weight: 600; }
.split { display: flex; gap: 1px; }
.split .tool { width: 23px; }
.split .arrow { width: 15px; }
.tool.on, .split.on .tool { background: #46607c; color: #f2f2f2; }
.split.off .tool { background: #464646; }
.split.off .caret::after { border-top-color: #7a7a7a; }

/* scene canvas */
.view { position: relative; flex: 1; min-height: 0; overflow: hidden; background: #454545; }
.grid-lines { position: absolute; inset: 0; width: 100%; height: 100%; pointer-events: none; }
.obj { position: absolute; }
.raw-image { left: 527px; top: 334px; width: 84px; height: 165px; background: #fdfdfd; }
.dropdown { left: 528px; top: 334px; width: 131px; height: 23px; padding: 1px 0 0 8px; appearance: none; background: #f2f2f2; color: #555; border-radius: 3px; border-bottom: 1px solid #bbb; font: 11px/20px "Liberation Sans", Arial, sans-serif; }
.chevron { left: 643px; top: 343px; width: 8px; height: 6px; }
.scroll-body { left: 661px; top: 334px; width: 149px; height: 150px; background: #7f7f7f; border-radius: 2px 0 0 0; }
.vtrack { left: 810px; top: 334px; width: 15px; height: 149px; background: #d2d2d2; border-radius: 3px; }
.vthumb { height: 97px; background: #f2f2f2; border-radius: 3px; border-bottom: 1px solid #aaa; }
.htrack { left: 661px; top: 484px; width: 149px; height: 14px; background: #f2f2f2; border-radius: 3px; }
.corner { left: 810px; top: 484px; width: 15px; height: 14px; background: #7c7c7c; border-radius: 0 0 3px 0; }
.field { left: 827px; top: 334px; width: 130px; height: 23px; padding-left: 6px; background: #fdfdfd; border-radius: 3px; font: italic 11px/20px "Liberation Sans", Arial, sans-serif; }
.field::placeholder { color: #8a8a8a; }
.new-text { left: 527px; top: 499px; color: #fff; font: 30px/34px "Liberation Sans", Arial, sans-serif; }
.ui-button { left: 528px; top: 583px; width: 81px; height: 81px; background: #f4f4f4; color: #444; border-radius: 3px; font: 20px/24px "Liberation Sans", Arial, sans-serif; }
.ui-toggle { left: 503px; top: 699px; display: flex; align-items: center; gap: 6px; color: #3b3b3b; font: 11px/15px "Liberation Sans", Arial, sans-serif; }
.ui-toggle input { width: 15px; height: 15px; appearance: none; background: #f6f6f6; border-radius: 3px; display: grid; place-items: center; }
.ui-toggle input::before { content: ""; width: 4px; height: 9px; margin-top: -2px; border: solid #666; border-width: 0 1px 1px 0; rotate: 40deg; }
.slider-bg { left: 529px; top: 770px; width: 80px; height: 39px; background: #d2d2d2; border-radius: 3px; }
.slider-knob { left: 528px; top: 753px; width: 15px; height: 78px; background: #f4f4f4; border-radius: 50%; }

.hgrip { display: block; width: 18px; height: 5px; border: solid #5a5a5a; border-width: 1px 0; }
.toolbox { position: absolute; left: 2px; top: 2px; width: 41px; padding: 7px 3px 3px; background: #0c0c0c; border-radius: 3px; }
.toolbox .hgrip { margin: 0 auto 8px; }
.toolset { display: grid; gap: 1px; grid-template-rows: repeat(6, 1fr); height: 135px; border-radius: 4px; overflow: hidden; }
.toolset .tool { height: auto; border-radius: 0; color: #c8c8c8; }
.toolset .tool.on { color: #fff; }

.ainav { position: absolute; right: 3px; bottom: 3px; width: 191px; height: 117px; padding: 1px 6px 0 9px; background: #0b0b0b; border-radius: 3px; color: #d0d0d0; }
.ai-title { display: flex; align-items: center; gap: 5px; margin-left: -4px; color: #b0b0b0; }
.ai-head { display: flex; align-items: center; gap: 5px; height: 17px; margin-bottom: 10px; font-weight: 500; }
.ai-title + .ai-head { margin-top: 1px; }
.ai-head .tri { width: 9px; }
.ai-check { display: flex; align-items: center; justify-content: space-between; margin-top: -6px; padding-left: 14px; font-weight: 500; }
.ai-check input, .check input { appearance: none; width: 15px; height: 15px; background: #282828; border-radius: 3px; }

/* tree lists */
.tri { display: flex; justify-content: center; flex: none; width: 14px; }
.tri::before { content: ""; border: 5px solid transparent; border-top: 8px solid #6c6c6c; border-bottom: 0; }
.tri.side::before { border: 5px solid transparent; border-left: 8px solid #6c6c6c; border-right: 0; }
.tree-wrap { display: flex; flex: 1; min-height: 0; overflow: hidden; }
.tree { display: flex; flex-direction: column; flex: 1; min-width: 0; }
.tree li { display: flex; align-items: center; flex: 1 1 0; min-height: 0; white-space: nowrap; padding-left: calc(var(--base) + var(--d) * 15px); }
.tree li > svg { width: 16px; height: 16px; }
.tri + svg { margin-left: 1px; }
.d0 { --d: 0; } .d1 { --d: 1; } .d2 { --d: 2; } .d3 { --d: 3; }
.d4 { --d: 4; } .d5 { --d: 5; } .d6 { --d: 6; } .d7 { --d: 7; }
.tree li > svg:first-child, .tree .vis + svg { margin-left: 15px; }
.htree { --base: 35px; height: calc(100% + 5px); background: linear-gradient(90deg, #323232 34px, #383838 34px); }
.htree li > svg { margin-right: 3px; }
.htree .root { background: #282828; font-weight: 600; color: #dadada; }
.htree .root .more { width: 13px; height: 13px; margin: 0 6px 0 auto; }
.htree .hover { position: relative; background: #434343; }
.htree .vis { position: absolute; left: 1px; display: flex; gap: 2px; color: #6a6a6a; }
.vis svg { width: 15px; height: 15px; }
.inactive { color: #777; }
.sbar { display: flex; flex-direction: column; align-items: center; width: 14px; padding: 6px 0 5px; background: #353535; }
.sbar .up { border: 4px solid transparent; border-bottom: 5px solid #c4c4c4; border-top: 0; }
.sbar .down { margin-top: auto; border: 4px solid transparent; border-top: 5px solid #c4c4c4; border-bottom: 0; }
.thumb { width: 11px; background: #5f5f5f; border-radius: 6px; }
.hthumb { height: 64%; margin-top: 7px; }
.pthumb { height: 41%; margin-top: 36px; }

.subbar { display: flex; align-items: center; flex: none; height: 22px; background: #3c3c3c; padding-right: 4px; }
.subbar.flat { padding-right: 0; border-bottom: 1px solid #2c2c2c; }
.add { display: flex; align-items: center; gap: 4px; margin-left: 7px; }
.add svg { width: 14px; height: 14px; }
.find { display: flex; align-items: center; height: 18px; margin-left: auto; padding: 0 1px 0 5px; width: 349px; background: #282828; border-top: 1px solid #161616; border-radius: 3px; }
.find svg:first-child { width: 10px; height: 10px; }
.find input { flex: 1; min-width: 0; padding-left: 5px; }
.find input::placeholder { color: #777; }
.log-find { width: 321px; margin-right: 3px; }
.proj-find { width: 343px; margin-right: 2px; }
.cb { display: flex; align-items: center; height: 21px; padding: 1px 4px 0 3px; border-right: 1px solid #2c2c2c; gap: 4px; }
.cb.clear { width: 61px; justify-content: space-between; padding-right: 5px; }
.cb.pressed { background: #505050; }
.count { display: flex; align-items: center; gap: 3px; width: 36px; height: 21px; margin-right: 1px; padding-left: 5px; background: #4a4a4a; }
.count.faint svg { color: #7c7c7c; }
.log { flex: 332; }
.log-detail { flex: 143; border-top: 1px solid #2a2a2a; }

.proj-body { display: grid; grid-template-columns: minmax(0, 364fr) minmax(0, 503fr); gap: 1px; flex: 1; min-height: 0; background: #202020; }
.proj-body > * { background: #383838; }
.ptree { --base: 3px; height: calc(100% + 7px); }
.ptree li > svg { margin-right: 2px; }
.ptree .strong { font-weight: 600; }
.ptree .strong > svg { margin-right: 4px; }
.selected { background: #4d4d4d; }
.filter { display: flex; align-items: center; justify-content: center; width: 28px; height: 21px; border-left: 1px solid #2c2c2c; }
.filter.hidden-count { width: 43px; gap: 2px; }
.files { display: flex; flex-direction: column; min-height: 0; background: #333; }
.crumbs { display: flex; align-items: center; flex: none; height: 23px; padding-left: 4px; background: #3f3f3f; }
.crumbs i { width: 6px; height: 6px; margin: 0 7px 0 5px; border: solid #9a9a9a; border-width: 1px 1px 0 0; rotate: 45deg; }
.crumbs .here { font-weight: 600; }
.filelist { display: grid; grid-template-rows: repeat(9, 1fr); height: 155px; margin-top: 1px; }
.filelist li { display: flex; align-items: center; gap: 2px; padding-left: 18px; min-height: 0; }
.path { display: flex; align-items: center; height: 22px; margin-top: auto; padding: 0 18px 0 3px; background: #3f3f3f; }
.path span { margin-left: 2px; }
.path input { appearance: none; width: 59px; height: 12px; margin-left: auto; background: linear-gradient(#5e5e5e, #5e5e5e) center / 100% 2px no-repeat; }
.path input::-webkit-slider-thumb { appearance: none; width: 12px; height: 12px; border-radius: 50%; background: #999; }

/* inspector */
.logo { display: flex; flex-direction: column; align-items: center; height: 90px; padding-top: 11px; color: #fff; font-family: "DejaVu Sans", sans-serif; font-weight: 700; }
.logo-name { font-size: 49px; line-height: 49px; }
.logo-sub { display: flex; align-items: center; gap: 5px; font-size: 11px; line-height: 12px; width: 154px; }
.logo-sub i { width: 101px; height: 9px; background: #fff; }
.groups { display: grid; gap: 2px; padding: 0 4px 0 5px; }
.group { padding: 3px 3px 3px 2px; background: #404040; border: 1px solid #242424; border-radius: 3px; height: 44px; display: flex; flex-direction: column; gap: 2px; }
.group.last { height: 26px; padding-top: 2px; }
.check { display: flex; align-items: center; gap: 3px; height: 17px; }
.check.disabled { color: #7e7e7e; }
.check.disabled input { background: #383838; }
.note { font-style: italic; line-height: 17px; }
.prop { display: grid; grid-template-columns: 163px minmax(0, 1fr); align-items: center; }
.prop input, .objfield { height: 19px; padding-left: 4px; background: #282828; border-top: 1px solid #161616; border-radius: 3px; }
.objfield { display: flex; align-items: center; }
.faded { opacity: .75; }
.target { display: flex; align-items: center; justify-content: center; align-self: stretch; width: 20px; margin-left: auto; background: #363636; border-radius: 0 3px 3px 0; }

.status { display: flex; align-items: center; justify-content: flex-end; gap: 12px; padding-right: 8px; color: #c4c4c4; }
```
